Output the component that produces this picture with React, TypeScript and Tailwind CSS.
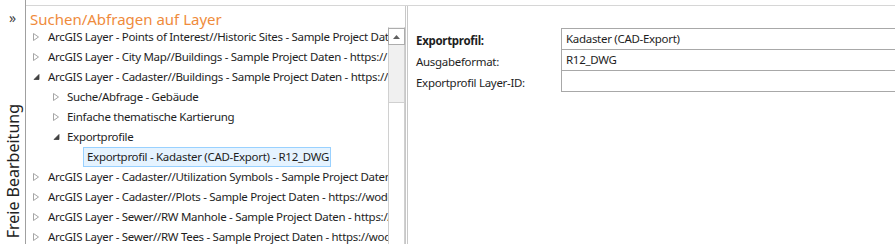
import React from 'react';

const Collapsed = () => (
    <svg width="9" height="10" viewBox="0 0 9 10" className="shrink-0">
        <path d="M1.5 1.5 L6.5 5 L1.5 8.5 Z" fill="#fff" stroke="#a6a6a6" strokeWidth="1" />
    </svg>
);

const Expanded = () => (
    <svg width="9" height="10" viewBox="0 0 9 10" className="shrink-0">
        <path d="M7 2.5 L7 7.5 L2 7.5 Z" fill="#404040" stroke="#404040" strokeWidth="0.8" />
    </svg>
);

type Row = { level: number; text: string; open?: boolean; selected?: boolean };

const rows: Row[] = [
    { level: 0, text: 'ArcGIS Layer - Points of Interest//Historic Sites - Sample Project Daten - https://' },
    { level: 0, text: 'ArcGIS Layer - City Map//Buildings - Sample Project Daten - https://' },
    { level: 0, text: 'ArcGIS Layer - Cadaster//Buildings - Sample Project Daten - https://', open: true },
    { level: 1, text: 'Suche/Abfrage - Gebäude' },
    { level: 1, text: 'Einfache thematische Kartierung' },
    { level: 1, text: 'Exportprofile', open: true },
    { level: 2, text: 'Exportprofil - Kadaster (CAD-Export) - R12_DWG', selected: true },
    { level: 0, text: 'ArcGIS Layer - Cadaster//Utilization Symbols - Sample Project Daten - https://' },
    { level: 0, text: 'ArcGIS Layer - Cadaster//Plots - Sample Project Daten - https://wodo' },
    { level: 0, text: 'ArcGIS Layer - Sewer//RW Manhole - Sample Project Daten - https://' },
    { level: 0, text: 'ArcGIS Layer - Sewer//RW Tees - Sample Project Daten - https://wodo' },
];

const fields = [
    { label: 'Exportprofil:', value: 'Kadaster (CAD-Export)', bold: true },
    { label: 'Ausgabeformat:', value: 'R12_DWG' },
    { label: 'Exportprofil Layer-ID:', value: '' },
];

const App = () => {
    return (
        <div className="w-[895px] h-[244px] bg-white flex overflow-hidden font-['Noto_Sans',sans-serif] text-[11.5px] tracking-[-0.3px] text-[#1e1e1e]">
            {/* side tab */}
            <div className="w-[26px] shrink-0 border-r border-[#a0a0a0] flex flex-col items-center justify-between pb-[6px] tracking-normal">
                <div className="mt-[11px] text-[14px] leading-none text-[#444]">»</div>
                <div className="[writing-mode:vertical-rl] rotate-180 text-[16px] leading-none text-[#222] whitespace-nowrap">
                    Freie Bearbeitung
                </div>
            </div>

            <div className="flex-1 flex flex-col min-w-0">
                <div className="h-[6px] shrink-0 border-b border-[#d6d6d6]" />
                <div className="flex flex-1 min-h-0">
                    {/* left pane */}
                    <div className="w-[379px] shrink-0 flex flex-col">
                        <div className="h-[21px] pl-[4px] pt-[3px] text-[15px] tracking-normal leading-[20px] text-[#ef8b3c] whitespace-nowrap">
                            Suchen/Abfragen auf Layer
                        </div>
                        <div className="flex flex-1 min-h-0">
                            <div className="w-[362px] overflow-hidden">
                                {rows.map((r, i) =>
                                    r.selected ? (
                                        <div key={i} className="h-[20px] flex items-center">
                                            <div className="ml-[57px] w-[248px] h-[20px] px-[3px] flex items-center border border-[#99d1ff] bg-[#e5f3ff] whitespace-nowrap">
                                                {r.text}
                                            </div>
                                        </div>
                                    ) : (
                                        <div
                                            key={i}
                                            className={`h-[20px] flex items-center whitespace-nowrap ${r.level === 0 ? 'pl-[6px]' : 'pl-[26px]'}`}
                                        >
                                            <span className="w-[16px] shrink-0 flex items-center">
                                                {r.open ? <Expanded /> : <Collapsed />}
                                            </span>
                                            <span className={r.level === 1 ? '-ml-[1px]' : ''}>{r.text}</span>
                                        </div>
                                    )
                                )}
                            </div>
                            {/* scrollbar */}
                            <div className="w-[17px] shrink-0 flex flex-col pt-[1px] border-l border-[#d0d0d0] border-r bg-[#f0f0f0]">
                                <div className="h-[17px] border border-[#adadad] bg-white flex items-center justify-center -ml-px -mr-px">
                                    <svg width="7" height="4" viewBox="0 0 7 4">
                                        <path d="M0 4 L3.5 0 L7 4 Z" fill="#606060" />
                                    </svg>
                                </div>
                                <div className="h-[57px]" />
                                <div className="flex-1 bg-white border-t border-[#d0d0d0]" />
                            </div>
                        </div>
                    </div>
                    {/* splitter */}
                    <div className="w-[3px] shrink-0 border-l border-r border-[#c8c8c8] bg-white" />

                    {/* right pane */}
                    <div className="flex-1 flex pt-[22px] pl-[8px]">
                        <div className="w-[145px] shrink-0">
                            {fields.map((f) => (
                                <div
                                    key={f.label}
                                    className={`h-[21px] pt-[5px] flex items-center whitespace-nowrap ${f.bold ? 'font-bold' : ''}`}
                                >
                                    {f.label}
                                </div>
                            ))}
                        </div>
                        <div className="flex-1 -mr-[10px]">
                            <div className="border-l border-t border-[#a8a8a8]">
                                {fields.map((f) => (
                                    <div
                                        key={f.label}
                                        className="h-[21px] border-b border-[#a8a8a8] px-[4px] flex items-center whitespace-nowrap"
                                    >
                                        {f.value}
                                    </div>
                                ))}
                            </div>
                        </div>
                    </div>
                </div>
            </div>
        </div>
    );
};

export default App;
